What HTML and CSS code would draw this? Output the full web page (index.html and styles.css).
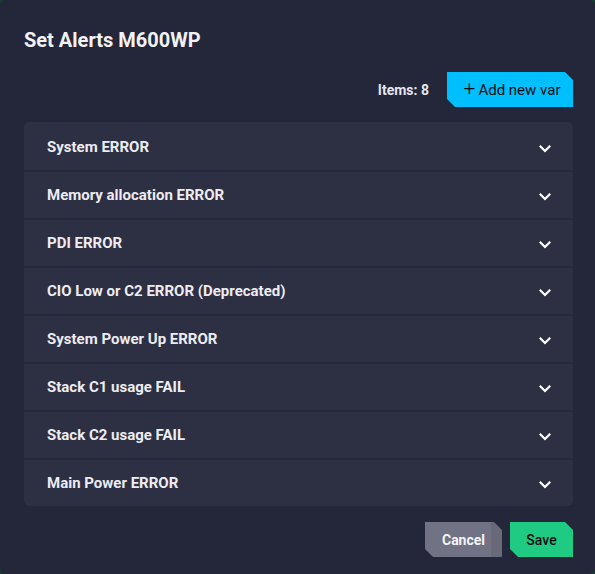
FILE: index.html
```html
<!DOCTYPE html>
<html lang="en">
<head>
<meta charset="utf-8">
<title>Set Alerts M600WP</title>
<link rel="stylesheet" href="styles.css">
</head>
<body>
<div class="dialog">
  <h1 class="title">Set Alerts M600WP</h1>
  <div class="toolbar">
    <span class="count">Items: 8</span>
    <button class="btn btn-add"><span class="plus">+</span>Add new var</button>
  </div>
  <ul class="list">
    <li class="row"><span class="label">System ERROR</span><svg class="chev" width="12" height="8" viewBox="0 0 12 8"><polyline points="1.5,1.5 6,6 10.5,1.5" /></svg></li>
    <li class="row"><span class="label">Memory allocation ERROR</span><svg class="chev" width="12" height="8" viewBox="0 0 12 8"><polyline points="1.5,1.5 6,6 10.5,1.5" /></svg></li>
    <li class="row"><span class="label">PDI ERROR</span><svg class="chev" width="12" height="8" viewBox="0 0 12 8"><polyline points="1.5,1.5 6,6 10.5,1.5" /></svg></li>
    <li class="row"><span class="label">CIO Low or C2 ERROR (Deprecated)</span><svg class="chev" width="12" height="8" viewBox="0 0 12 8"><polyline points="1.5,1.5 6,6 10.5,1.5" /></svg></li>
    <li class="row"><span class="label">System Power Up ERROR</span><svg class="chev" width="12" height="8" viewBox="0 0 12 8"><polyline points="1.5,1.5 6,6 10.5,1.5" /></svg></li>
    <li class="row"><span class="label">Stack C1 usage FAIL</span><svg class="chev" width="12" height="8" viewBox="0 0 12 8"><polyline points="1.5,1.5 6,6 10.5,1.5" /></svg></li>
    <li class="row"><span class="label">Stack C2 usage FAIL</span><svg class="chev" width="12" height="8" viewBox="0 0 12 8"><polyline points="1.5,1.5 6,6 10.5,1.5" /></svg></li>
    <li class="row"><span class="label">Main Power ERROR</span><svg class="chev" width="12" height="8" viewBox="0 0 12 8"><polyline points="1.5,1.5 6,6 10.5,1.5" /></svg></li>
  </ul>
  <div class="footer">
    <button class="btn btn-cancel">Cancel</button>
    <button class="btn btn-save">Save</button>
  </div>
</div>
</body>
</html>
```

FILE: styles.css
```css
* { box-sizing: border-box; }
html, body { margin: 0; padding: 0; }
body {
  background: #183a32;
  font-family: Roboto, "Liberation Sans", sans-serif;
}
.dialog {
  width: 595px;
  height: 574px;
  background: #24263a;
  border-radius: 6px;
  padding: 28px 22px 0 24px;
  display: flex;
  flex-direction: column;
}
.title {
  margin: 0;
  font-size: 20px;
  line-height: 24px;
  font-weight: 700;
  color: #f2f2f6;
}
.toolbar {
  margin-top: 20px;
  display: flex;
  justify-content: flex-end;
  align-items: center;
  gap: 18px;
}
.count {
  font-size: 14px;
  font-weight: 700;
  color: #e6e6ec;
}
.btn {
  border: 0;
  font-family: inherit;
  height: 35px;
  padding: 0;
  cursor: pointer;
  clip-path: polygon(0 0, calc(100% - 8px) 0, 100% 8px, 100% 100%, 8px 100%, 0 calc(100% - 8px));
}
.btn-add {
  width: 126px;
  background: #00bfff;
  color: #0a0a10;
  font-size: 15px;
  display: flex;
  align-items: center;
  justify-content: center;
  gap: 3px;
  padding-left: 4px;
}
.plus {
  font-size: 21px;
  line-height: 1;
  font-weight: 300;
  margin-top: -2px;
}
.list {
  list-style: none;
  margin: 15px 0 0;
  padding: 0;
  background: #2d2f43;
  border-radius: 5px;
  overflow: hidden;
}
.row {
  height: 48px;
  display: flex;
  align-items: center;
  justify-content: space-between;
  padding: 0 22px 0 23px;
  border-top: 2px solid #26283b;
}
.row:first-child { border-top: 0; }
.label {
  font-size: 15px;
  font-weight: 700;
  color: #ececf2;
}
.row:first-child .label { margin-top: 1px; }
.chev {
  margin-top: 4px;
  fill: none;
  stroke: #ffffff;
  stroke-width: 2.2;
  stroke-linecap: square;
}
.row:first-child .chev { margin-top: 6px; }
.footer {
  margin-top: 16px;
  display: flex;
  justify-content: flex-end;
  gap: 8px;
}
.btn-cancel {
  width: 77px;
  background: linear-gradient(90deg, #717283 0, #717283 86%, #686979 86%, #686979 100%);
  color: #f4f4f8;
  font-size: 14px;
  font-weight: 700;
}
.btn-save {
  width: 63px;
  background: #1fcb83;
  color: #0b0b10;
  font-size: 14px;
  font-weight: 500;
}
```
